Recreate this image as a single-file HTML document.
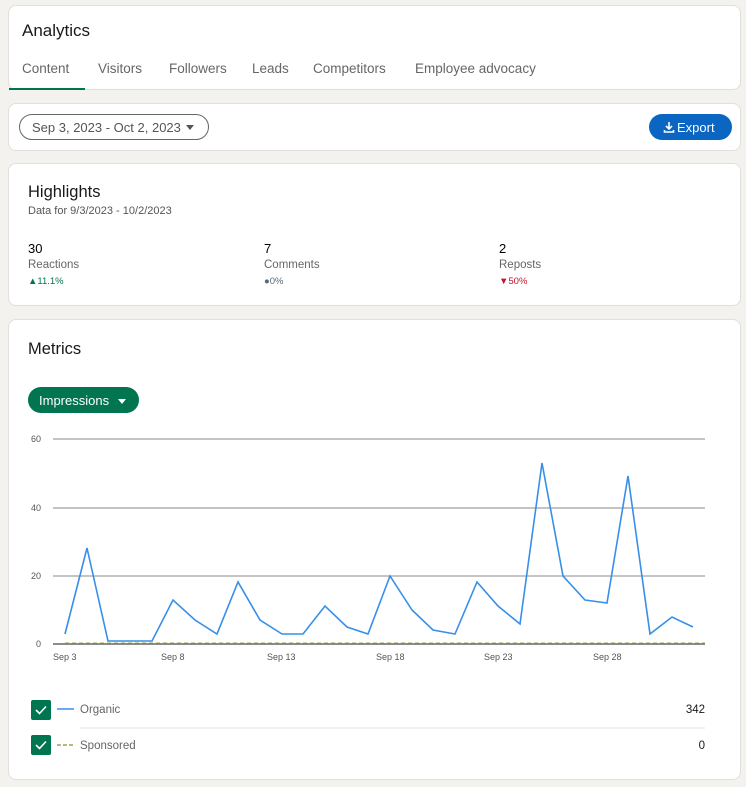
<!DOCTYPE html>
<html><head><meta charset="utf-8"><style>
body{margin:0;background:#f3f2ef;font-family:"Liberation Sans",sans-serif;color:#000;width:746px;height:787px;position:relative;overflow:hidden}
.card{position:absolute;left:8px;width:733px;background:#fff;border:1px solid #e0dfdc;border-radius:8px;box-sizing:border-box}
.t{position:absolute;white-space:nowrap}
</style></head><body>
<div class="card" style="top:5px;height:85px">
<div class="t" style="left:13px;top:15px;font-size:17px;color:#191919">Analytics</div>
<div class="t" style="left:13px;top:55px;font-size:13.5px;color:#666">Content</div>
<div style="position:absolute;left:0;top:82px;width:76px;height:2px;background:#01754f"></div>
<div class="t" style="left:89px;top:55px;font-size:13.5px;color:#666">Visitors</div>
<div class="t" style="left:160px;top:55px;font-size:13.5px;color:#666">Followers</div>
<div class="t" style="left:243px;top:55px;font-size:13.5px;color:#666">Leads</div>
<div class="t" style="left:304px;top:55px;font-size:13.5px;color:#666">Competitors</div>
<div class="t" style="left:406px;top:55px;font-size:13.5px;color:#666">Employee advocacy</div>
</div>
<div class="card" style="top:103px;height:48px">
<div style="position:absolute;left:10px;top:10px;width:190px;height:26px;border:1px solid #666;border-radius:13px;box-sizing:border-box"></div>
<div class="t" style="left:23px;top:16px;font-size:13px;color:#555">Sep 3, 2023 - Oct 2, 2023</div>
<div style="position:absolute;left:177px;top:21px;border-left:4px solid transparent;border-right:4px solid transparent;border-top:5px solid #555"></div>
<div style="position:absolute;left:640px;top:10px;width:83px;height:26px;background:#0a66c2;border-radius:13px"></div>
<svg style="position:absolute;left:654px;top:17px" width="12" height="12" viewBox="0 0 12 12"><path d="M6 1v7M3 5l3 3 3-3M1.5 9v2h9V9" stroke="#fff" stroke-width="1.6" fill="none"/></svg>
<div class="t" style="left:668px;top:16px;font-size:13px;color:#fff">Export</div>
</div>
<div class="card" style="top:163px;height:143px">
<div class="t" style="left:19px;top:19px;font-size:16.5px;color:#191919">Highlights</div>
<div class="t" style="left:19px;top:41px;font-size:11px;color:#555">Data for 9/3/2023 - 10/2/2023</div>
<div class="t" style="left:19px;top:77px;font-size:13px">30</div>
<div class="t" style="left:19px;top:95px;font-size:11.5px;color:#666">Reactions</div>
<div class="t" style="left:19px;top:112px;font-size:9.5px;color:#01754f">▲11.1%</div>
<div class="t" style="left:255px;top:77px;font-size:13px">7</div>
<div class="t" style="left:255px;top:95px;font-size:11.5px;color:#666">Comments</div>
<div class="t" style="left:255px;top:112px;font-size:9.5px;color:#56687a">●0%</div>
<div class="t" style="left:490px;top:77px;font-size:13px">2</div>
<div class="t" style="left:490px;top:95px;font-size:11.5px;color:#666">Reposts</div>
<div class="t" style="left:490px;top:112px;font-size:9.5px;color:#cb112d">▼50%</div>
</div>
<div class="card" style="top:319px;height:461px">
<div class="t" style="left:19px;top:20px;font-size:16.5px;color:#191919">Metrics</div>
<div style="position:absolute;left:19px;top:67px;width:111px;height:26px;background:#01754f;border-radius:13px"></div>
<div class="t" style="left:30px;top:73px;font-size:13px;color:#fff">Impressions</div>
<div style="position:absolute;left:109px;top:79px;border-left:4px solid transparent;border-right:4px solid transparent;border-top:5px solid #fff"></div>
</div>
<svg style="position:absolute;left:0;top:0" width="746" height="787">
<g font-family="Liberation Sans" font-size="9" fill="#555">
<text x="31" y="442">60</text><text x="31" y="511">40</text><text x="31" y="579">20</text><text x="36" y="647">0</text>
<text x="53" y="660">Sep 3</text><text x="161" y="660">Sep 8</text><text x="267" y="660">Sep 13</text><text x="376" y="660">Sep 18</text><text x="484" y="660">Sep 23</text><text x="593" y="660">Sep 28</text>
</g>
<g stroke="#888" stroke-width="1"><line x1="53" y1="439" x2="705" y2="439"/><line x1="53" y1="508" x2="705" y2="508"/><line x1="53" y1="576" x2="705" y2="576"/></g>
<line x1="53" y1="644" x2="705" y2="644" stroke="#666" stroke-width="1.5"/>
<line x1="65" y1="643" x2="705" y2="643" stroke="#98a84a" stroke-width="1" stroke-dasharray="4,3"/>
<polyline fill="none" stroke="#378fe9" stroke-width="1.6" points="65,634 87,548 108,641 130,641 152,641 173,600 195,620 217,634 238,582 260,620 282,634 303,634 325,606 347,627 368,634 390,576 412,610 433,630 455,634 477,582 498,606 520,624 542,463 563,576 585,600 607,603 628,476 650,634 672,617 693,627"/>
<rect x="31" y="700" width="20" height="20" rx="2" fill="#01754f"/><path d="M36 710l3.5 3.5 6.5-7" stroke="#fff" stroke-width="1.6" fill="none"/>
<rect x="31" y="735" width="20" height="20" rx="2" fill="#01754f"/><path d="M36 745l3.5 3.5 6.5-7" stroke="#fff" stroke-width="1.6" fill="none"/>
<line x1="57" y1="709" x2="74" y2="709" stroke="#378fe9" stroke-width="1.5"/>
<line x1="57" y1="745" x2="74" y2="745" stroke="#98a84a" stroke-width="1.5" stroke-dasharray="4,2"/>
<line x1="80" y1="728" x2="705" y2="728" stroke="#e5e5e5"/>
<g font-family="Liberation Sans" font-size="11.5" fill="#666"><text x="80" y="713">Organic</text><text x="80" y="749">Sponsored</text></g>
<g font-family="Liberation Sans" font-size="11.5" fill="#191919" text-anchor="end"><text x="705" y="713">342</text><text x="705" y="749">0</text></g>
</svg>
</body></html>
